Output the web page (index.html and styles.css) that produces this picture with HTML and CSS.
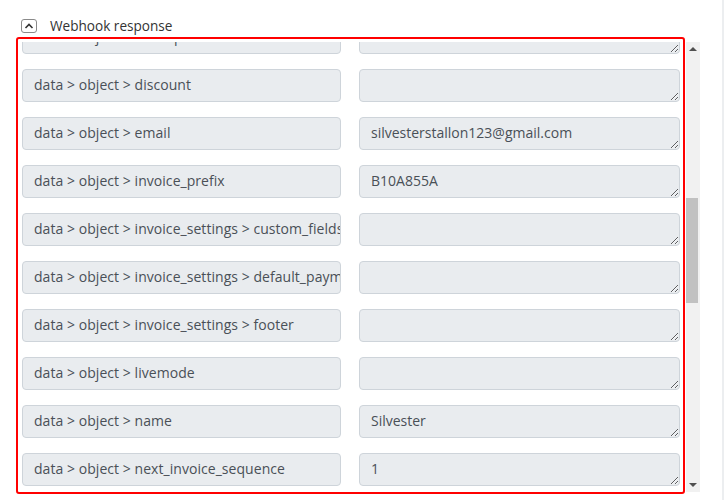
FILE: index.html
```html
<!DOCTYPE html>
<html>
<head>
<meta charset="utf-8">
<link rel="stylesheet" href="styles.css">
</head>
<body>
<div class="page">
  <div class="header">
    <span class="toggle">
      <svg width="10" height="8" viewBox="0 0 10 8"><polyline points="1.5,6 5,2.5 8.5,6" fill="none" stroke="#333" stroke-width="1.6"/></svg>
    </span>
    <span class="title">Webhook response</span>
  </div>
  <div class="panel">
    <div class="box">
      <div class="viewport">
        <div class="list">
          <div class="row"><div class="key">data &gt; object &gt; description</div><textarea class="val" readonly></textarea></div>
          <div class="row"><div class="key">data &gt; object &gt; discount</div><textarea class="val" readonly></textarea></div>
          <div class="row"><div class="key">data &gt; object &gt; email</div><textarea class="val" readonly>silvesterstallon123@gmail.com</textarea></div>
          <div class="row"><div class="key">data &gt; object &gt; invoice_prefix</div><textarea class="val" readonly>B10A855A</textarea></div>
          <div class="row"><div class="key">data &gt; object &gt; invoice_settings &gt; custom_fields</div><textarea class="val" readonly></textarea></div>
          <div class="row"><div class="key">data &gt; object &gt; invoice_settings &gt; default_payment_method</div><textarea class="val" readonly></textarea></div>
          <div class="row"><div class="key">data &gt; object &gt; invoice_settings &gt; footer</div><textarea class="val" readonly></textarea></div>
          <div class="row"><div class="key">data &gt; object &gt; livemode</div><textarea class="val" readonly></textarea></div>
          <div class="row"><div class="key">data &gt; object &gt; name</div><textarea class="val" readonly>Silvester</textarea></div>
          <div class="row"><div class="key">data &gt; object &gt; next_invoice_sequence</div><textarea class="val" readonly>1</textarea></div>
        </div>
      </div>
    </div>
    <div class="scrollbar">
      <div class="arrow up"></div>
      <div class="track"><div class="thumb"></div></div>
      <div class="arrow down"></div>
    </div>
  </div>
</div>
</body>
</html>
```
FILE: styles.css
```css
html, body {
  margin: 0;
  padding: 0;
  background: #fff;
}
body {
  font-family: "Open Sans", "Noto Sans", sans-serif;
  color: #333;
}
.page {
  width: 722px;
  height: 500px;
  border-right: 2px solid #eceef0;
  box-sizing: content-box;
  overflow: hidden;
}
.header {
  display: flex;
  align-items: center;
  padding: 19px 0 0 21px;
  height: 14px;
}
.toggle {
  width: 14px;
  height: 12px;
  border: 1px solid #8a8a8a;
  border-radius: 3px;
  display: flex;
  align-items: center;
  justify-content: center;
}
.toggle svg { display: block; }
.title {
  margin-left: 13px;
  font-size: 13.6px;
  line-height: 14px;
  color: #333;
}
.panel {
  display: flex;
  margin-left: 16px;
  margin-top: 4px;
}
.box {
  width: 665px;
  height: 453px;
  border: 2px solid #ff0000;
  border-radius: 3px;
}
.viewport {
  margin-top: 3px;
  height: 450px;
  overflow: hidden;
}
.list {
  margin-top: -21px;
  padding: 0 4px;
  display: flex;
  flex-direction: column;
  gap: 15px;
}
.row {
  display: grid;
  grid-template-columns: 319px 321px;
  column-gap: 18px;
}
.key, .val {
  box-sizing: border-box;
  height: 33px;
  background: #e9ecef;
  border: 1px solid #ced4da;
  border-radius: 4px;
  font-family: "Open Sans", "Noto Sans", sans-serif;
  font-size: 14px;
  line-height: 20px;
  color: #495057;
  padding: 5px 11px 7px;
  margin: 0;
}
.key {
  white-space: nowrap;
  overflow: hidden;
  letter-spacing: 0.05px;
}
.val {
  display: block;
  width: 321px;
  resize: vertical;
  outline: none;
  overflow: hidden;
}
.scrollbar {
  width: 14px;
  height: 450px;
  margin-top: 5px;
  margin-left: 1px;
  background: #f1f1f1;
  display: flex;
  flex-direction: column;
}
.arrow {
  height: 14px;
  display: flex;
  align-items: center;
  justify-content: center;
}
.arrow::before {
  content: "";
  width: 0;
  height: 0;
  border-left: 4px solid transparent;
  border-right: 4px solid transparent;
}
.up::before { border-bottom: 4px solid #505050; }
.down::before { border-top: 4px solid #505050; }
.track {
  flex: 1;
}
.thumb {
  margin-top: 142px;
  margin-right: 2px;
  height: 105px;
  background: #c1c1c1;
}
```
